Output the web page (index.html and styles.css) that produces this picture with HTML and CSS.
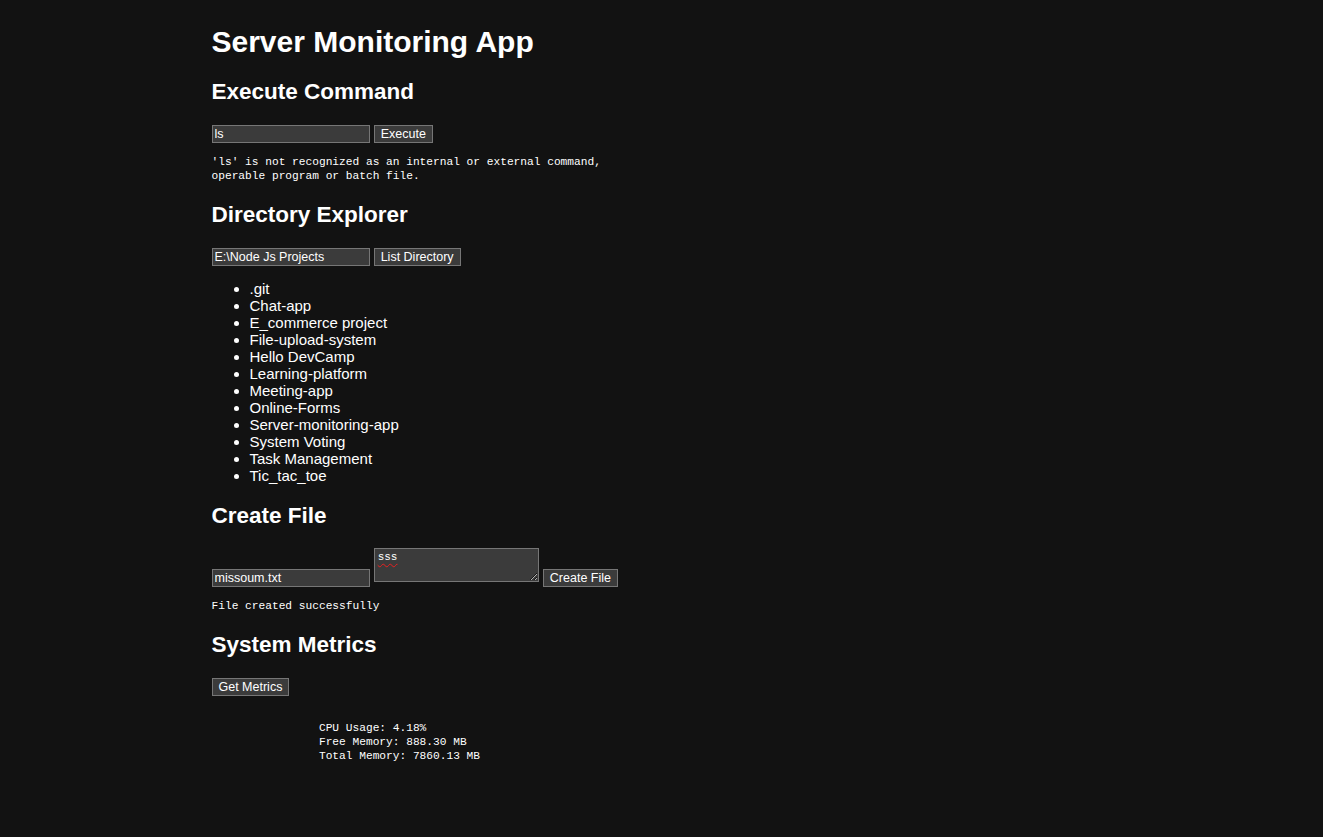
FILE: index.html
```html
<!DOCTYPE html>
<html lang="en">
<head>
<meta charset="utf-8">
<title>Server Monitoring App</title>
<link rel="stylesheet" href="styles.css">
</head>
<body>
<div class="container">
  <h1>Server Monitoring App</h1>

  <section class="section">
    <h2>Execute Command</h2>
    <div class="row">
      <input class="field" type="text" value="ls"> <button class="btn">Execute</button>
    </div>
    <pre class="output">'ls' is not recognized as an internal or external command,
operable program or batch file.</pre>
  </section>

  <section class="section">
    <h2>Directory Explorer</h2>
    <div class="row">
      <input class="field" type="text" value="E:\Node Js Projects"> <button class="btn">List Directory</button>
    </div>
    <ul class="dir-list">
      <li>.git</li>
      <li>Chat-app</li>
      <li>E_commerce project</li>
      <li>File-upload-system</li>
      <li>Hello DevCamp</li>
      <li>Learning-platform</li>
      <li>Meeting-app</li>
      <li>Online-Forms</li>
      <li>Server-monitoring-app</li>
      <li>System Voting</li>
      <li>Task Management</li>
      <li>Tic_tac_toe</li>
    </ul>
  </section>

  <section class="section">
    <h2>Create File</h2>
    <div class="row">
      <input class="field" type="text" value="missoum.txt"> <textarea class="content" spellcheck="false">sss</textarea> <button class="btn">Create File</button>
    </div>
    <pre class="output">File created successfully</pre>
  </section>

  <section class="section">
    <h2>System Metrics</h2>
    <div class="row">
      <button class="btn">Get Metrics</button>
    </div>
    <pre class="output metrics">

                CPU Usage: 4.18%
                Free Memory: 888.30 MB
                Total Memory: 7860.13 MB
            </pre>
  </section>
</div>
</body>
</html>
```

FILE: styles.css
```css
html, body {
  margin: 0;
  padding: 0;
}

body {
  background: #121212;
  color: #ffffff;
  font-family: "Liberation Sans", Arial, sans-serif;
  font-size: 15px;
}

.container {
  width: 900px;
  margin: 0 auto;
}

h1 {
  font-size: 30px;
  margin: 25px 0 19.7px;
}

h2 {
  font-size: 22.5px;
  margin: 18.7px 0 19px;
}

.field,
.btn,
.content {
  background: #3b3b3b;
  color: #ffffff;
  border: 1px solid #767676;
  font-family: "Liberation Sans", Arial, sans-serif;
  font-size: 12.5px;
  margin: 0;
}

.field {
  box-sizing: border-box;
  width: 158px;
  height: 18px;
  padding: 1px 2px;
}

.btn {
  box-sizing: border-box;
  height: 18px;
  padding: 0 6px;
}

.content {
  box-sizing: border-box;
  width: 165px;
  height: 34px;
  padding: 2px 3px;
  font-family: "Liberation Mono", monospace;
  font-size: 11px;
  text-decoration: underline wavy #e82020;
  text-decoration-thickness: 1.3px;
  text-underline-offset: 3px;
}

.output {
  font-family: "Liberation Mono", monospace;
  font-size: 11.2px;
  line-height: 14.5px;
  margin: 12px 0 11px;
}

.output.metrics {
  line-height: 14px;
  margin-top: 11px;
}

.dir-list {
  font-size: 15px;
  line-height: 17px;
  margin: 14px 0 15.5px;
  padding-left: 38px;
}
```
